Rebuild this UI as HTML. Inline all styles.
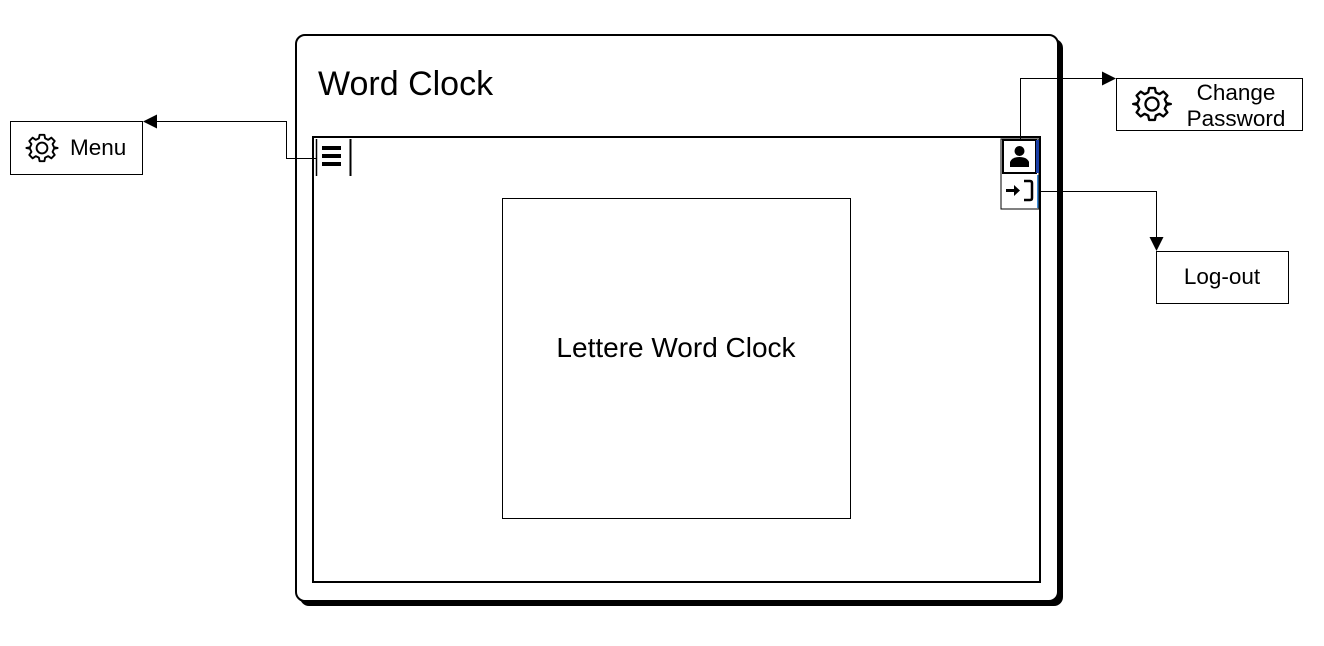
<!DOCTYPE html>
<html><head><meta charset="utf-8"><style>
html,body{margin:0;padding:0;background:#fff;width:1324px;height:646px;overflow:hidden}
svg{display:block}
text{font-family:"Liberation Sans",Arial,sans-serif;fill:#000}
</style></head><body>
<svg width="1324" height="646" viewBox="0 0 1324 646" xmlns="http://www.w3.org/2000/svg">
<defs>
<g id="gear">
<path d="M-2,-11 L2,-11 L2.6,-8 L5.2,-6.8 L7.8,-8.6 L10.6,-5.8 L8.8,-3.2 L10,-0.6 L13,0 L13,0 L10,0.6 L8.8,3.2 L10.6,5.8 L7.8,8.6 L5.2,6.8 L2.6,8 L2,11 L-2,11 L-2.6,8 L-5.2,6.8 L-7.8,8.6 L-10.6,5.8 L-8.8,3.2 L-10,0.6 L-13,0 L-10,-0.6 L-8.8,-3.2 L-10.6,-5.8 L-7.8,-8.6 L-5.2,-6.8 L-2.6,-8 Z" fill="none" stroke="#000" stroke-width="1.6" stroke-linejoin="round"/>
<circle r="4.5" fill="none" stroke="#000" stroke-width="1.6"/>
</g>
</defs>
<rect x="300" y="39" width="763" height="567" rx="9" fill="#000"/>
<rect x="296" y="35" width="762" height="566" rx="9" fill="#fff" stroke="#000" stroke-width="2"/>
<text x="318" y="95" font-size="34">Word Clock</text>
<rect x="313" y="137" width="727" height="445" fill="#fff" stroke="#000" stroke-width="2"/>
<rect x="502.5" y="198.5" width="348" height="320" fill="#fff" stroke="#000" stroke-width="1"/>
<text x="676" y="357" font-size="28" text-anchor="middle">Lettere Word Clock</text>
<rect x="316" y="139" width="36" height="37" fill="#fff"/>
<line x1="316.5" y1="139" x2="316.5" y2="176" stroke="#000" stroke-width="1.5"/>
<line x1="350.5" y1="139" x2="350.5" y2="176" stroke="#000" stroke-width="2"/>
<rect x="322" y="146" width="19" height="4" fill="#000"/>
<rect x="322" y="154" width="19" height="4" fill="#000"/>
<rect x="322" y="162" width="19" height="4" fill="#000"/>
<rect x="1001" y="139" width="38" height="70" fill="#fff" stroke="#000" stroke-width="1"/>
<rect x="1003" y="140" width="33" height="33" fill="#fff" stroke="#000" stroke-width="2"/>
<rect x="1036" y="140" width="3" height="33" fill="#1a3fa8"/>
<rect x="1037" y="175" width="1.5" height="33" fill="#3a8ad8"/>
<circle cx="1019.5" cy="151" r="5" fill="#000"/>
<path d="M1010,167 L1010,162 Q1012,157 1019.5,157 Q1027,157 1029,162 L1029,167 Z" fill="#000"/>
<path d="M1024,181 L1030,181 Q1032,181 1032,183 L1032,198 Q1032,200 1030,200 L1024,200" fill="none" stroke="#000" stroke-width="2.5"/>
<path d="M1006,189 L1014,189 L1014,185 L1020,190.5 L1014,196 L1014,192 L1006,192 Z" fill="#000"/>
<polyline points="316,158.5 286.5,158.5 286.5,121.5 156,121.5" fill="none" stroke="#000" stroke-width="1"/>
<path d="M143,121.5 L157,114.5 L157,128.5 Z" fill="#000"/>
<polyline points="1020.5,139 1020.5,78.5 1102,78.5" fill="none" stroke="#000" stroke-width="1"/>
<path d="M1116,78.5 L1102,71.5 L1102,85.5 Z" fill="#000"/>
<polyline points="1040,191.5 1156.5,191.5 1156.5,238" fill="none" stroke="#000" stroke-width="1"/>
<path d="M1156.5,251 L1149.5,237 L1163.5,237 Z" fill="#000"/>
<rect x="10.5" y="121.5" width="132" height="53" fill="#fff" stroke="#000" stroke-width="1"/>
<use href="#gear" transform="translate(42,148) scale(1.2)"/>
<text x="70" y="155" font-size="22.5">Menu</text>
<rect x="1116.5" y="78.5" width="186" height="52" fill="#fff" stroke="#000" stroke-width="1"/>
<use href="#gear" transform="translate(1152,104) scale(1.45)"/>
<text x="1236" y="100" font-size="22.5" text-anchor="middle">Change</text>
<text x="1236" y="126" font-size="22.5" text-anchor="middle">Password</text>
<rect x="1156.5" y="251.5" width="132" height="52" fill="#fff" stroke="#000" stroke-width="1"/>
<text x="1222" y="284" font-size="22.5" text-anchor="middle">Log-out</text>
</svg>
</body></html>
